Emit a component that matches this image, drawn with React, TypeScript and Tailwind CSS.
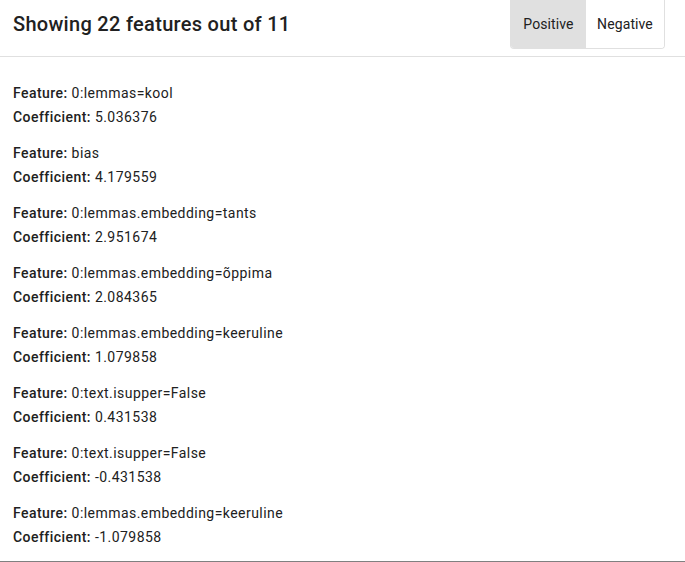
import React, { useState } from 'react';

const FEATURES = [
    { name: '0:lemmas=kool', coef: '5.036376' },
    { name: 'bias', coef: '4.179559' },
    { name: '0:lemmas.embedding=tants', coef: '2.951674' },
    { name: '0:lemmas.embedding=õppima', coef: '2.084365' },
    { name: '0:lemmas.embedding=keeruline', coef: '1.079858' },
    { name: '0:text.isupper=False', coef: '0.431538' },
    { name: '0:text.isupper=False', coef: '-0.431538' },
    { name: '0:lemmas.embedding=keeruline', coef: '-1.079858' },
];

export default function App() {
    const [mode, setMode] = useState<'positive' | 'negative'>('positive');

    return (
        <div className="w-[685px] h-[562px] bg-white text-[#212121] font-['Roboto',sans-serif] flex flex-col overflow-hidden">
            {/* Header */}
            <div className="h-[57px] shrink-0 flex items-start justify-between border-b border-[#e0e0e0] pl-[13px] pr-[20px]">
                <h1 className="text-[20px] leading-[48px] font-medium tracking-[0.3px]">
                    Showing 22 features out of 11
                </h1>
                <div className="flex h-[49px] border border-t-0 border-[#e0e0e0] rounded-b-[4px] overflow-hidden text-[14px] tracking-[0.1px]">
                    <button
                        onClick={() => setMode('positive')}
                        className={`w-[75px] ${mode === 'positive' ? 'bg-[#e0e0e0]' : 'bg-white'}`}
                    >
                        Positive
                    </button>
                    <button
                        onClick={() => setMode('negative')}
                        className={`w-[78px] ${mode === 'negative' ? 'bg-[#e0e0e0]' : 'bg-white'}`}
                    >
                        Negative
                    </button>
                </div>
            </div>

            {/* Feature list */}
            <div className="flex-1 pt-[24px] pl-[13px] border-b border-[#808080] text-[14px] leading-[24px] tracking-[0.45px] flex flex-col gap-[12px]">
                {FEATURES.map((f, i) => (
                    <div key={i}>
                        <div>
                            <span className="font-medium">Feature:</span> {f.name}
                        </div>
                        <div>
                            <span className="font-medium">Coefficient:</span> {f.coef}
                        </div>
                    </div>
                ))}
            </div>
        </div>
    );
}
